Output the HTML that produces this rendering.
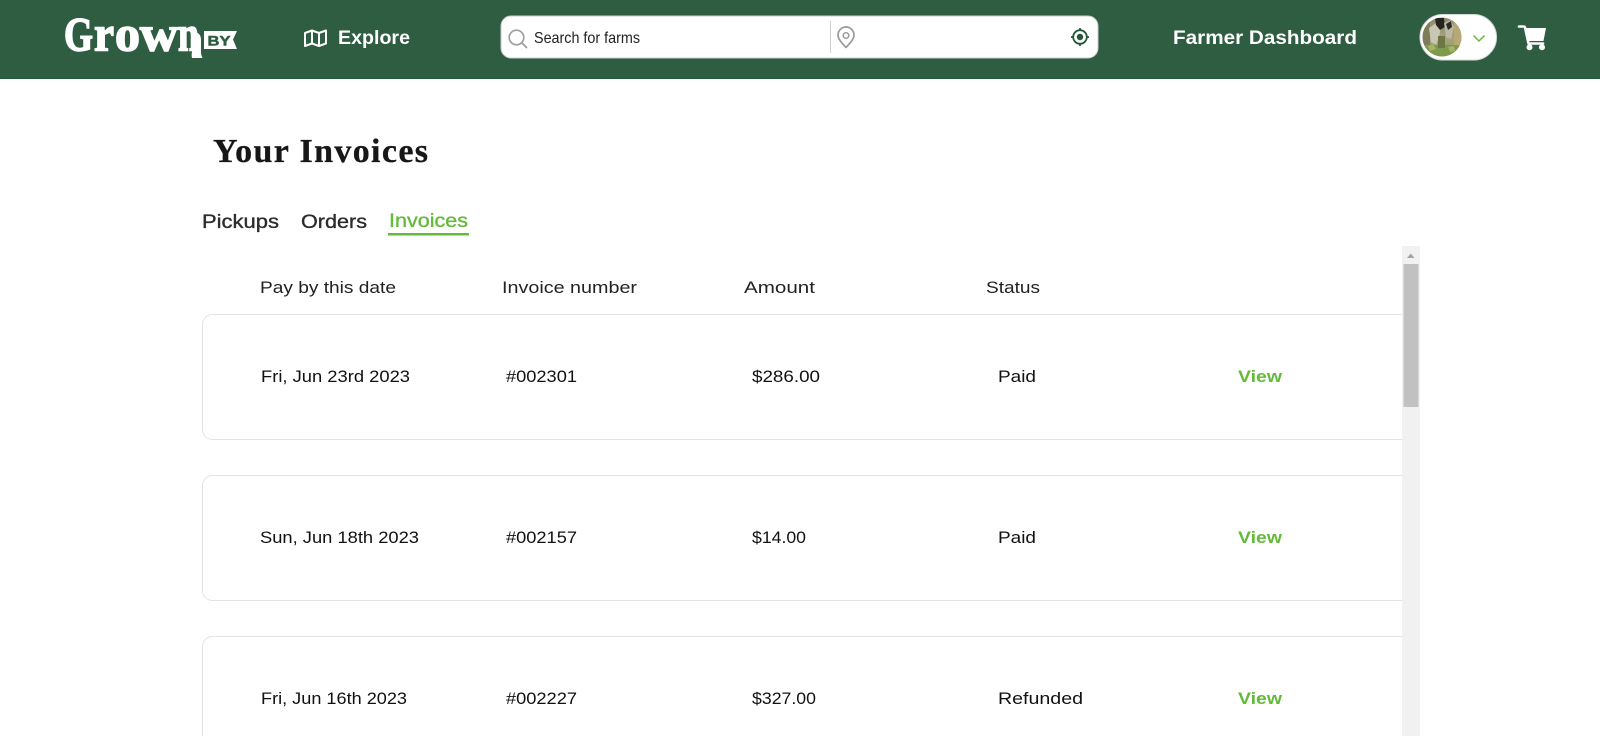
<!DOCTYPE html>
<html lang="en">
<head>
<meta charset="utf-8">
<title>Your Invoices</title>
<style>
html,body{margin:0;padding:0;background:#fff;width:1600px;height:736px;overflow:hidden}
svg{display:block}
text{font-family:"Liberation Sans",sans-serif}
.nav{font-weight:700;font-size:19px;fill:#fff}
.logo{font-family:"Liberation Serif",serif;font-size:50px;font-weight:700;fill:#fff;stroke:#fff;stroke-width:1.600}
.tab{font-size:19px;fill:#2c2c2c;stroke:#2c2c2c;stroke-width:.35}
.th{font-size:16.5px;fill:#222}
.td{font-size:16.5px;fill:#111}
.view{font-size:17px;font-weight:700;fill:#63bb39}
</style>
</head>
<body>
<svg width="1600" height="736" viewBox="0 0 1600 736" xmlns="http://www.w3.org/2000/svg">
  <defs>
    <clipPath id="av"><circle cx="1442" cy="37" r="19.500"/></clipPath>
    <clipPath id="list"><rect x="190" y="300" width="1212" height="436"/></clipPath>
    <linearGradient id="avg" x1="0" y1="0" x2="0" y2="1">
      <stop offset="0" stop-color="#8f8a70"/>
      <stop offset=".55" stop-color="#a6a47c"/>
      <stop offset="1" stop-color="#7f9a52"/>
    </linearGradient>
  </defs>
  <rect width="1600" height="736" fill="#fff"/>

  <!-- header -->
  <rect width="1600" height="79" fill="#2f5d41"/>
  <rect y="78" width="1600" height="1" fill="#1e5a3a"/>

  <!-- logo -->
  <text class="logo" x="64" y="50.500" textLength="29" lengthAdjust="spacingAndGlyphs" style="font-size:48px">G</text>
  <text class="logo" x="94" y="50.500" textLength="20" lengthAdjust="spacingAndGlyphs">r</text>
  <text class="logo" x="115" y="50.500" textLength="25" lengthAdjust="spacingAndGlyphs">o</text>
  <text class="logo" x="140" y="50.500" textLength="38" lengthAdjust="spacingAndGlyphs">w</text>
  <text class="logo" x="178" y="50.500" textLength="21" lengthAdjust="spacingAndGlyphs">n</text>
  <path d="M191 35c4-4 10-3 10 5v12c0 2 .5 4 1.500 6h-10.500c-.5-2-.5-4 0-6z" fill="#fff"/>
  <path d="M204 31h33l-4 8.500 4 9.500h-33z" fill="#fff"/>
  <text x="207.500" y="45.500" font-size="14" font-weight="700" textLength="23" lengthAdjust="spacingAndGlyphs" fill="#2f5d41" stroke="#2f5d41" stroke-width=".5">BY</text>

  <!-- explore -->
  <path d="M305 33l7-2.500 7 2.500 7-2.500v13l-7 2.500-7-2.500-7 2.500zM312 31v12.500M319 33v12.500" fill="none" stroke="#fff" stroke-width="2" stroke-linejoin="round"/>
  <text class="nav" x="338" y="44" textLength="72" lengthAdjust="spacingAndGlyphs">Explore</text>

  <!-- search -->
  <rect x="501" y="16" width="597" height="42" rx="10" fill="#fff" stroke="#c9cdc9" stroke-width="1"/>
  <circle cx="516.500" cy="37.500" r="7.300" fill="none" stroke="#a0a0a0" stroke-width="1.700"/>
  <path d="M522 43l4.500 4.500" stroke="#a0a0a0" stroke-width="1.900" stroke-linecap="round"/>
  <text x="534" y="43" font-size="16" textLength="106" lengthAdjust="spacingAndGlyphs" fill="#222">Search for farms</text>
  <rect x="830" y="21" width="1" height="32" fill="#cfcfcf"/>
  <path d="M846 47.500c-3-3.500-8-8-8-12.500a8 8 0 0 1 16 0c0 4.500-5 9-8 12.500z" fill="none" stroke="#9a9a9a" stroke-width="1.700" stroke-linejoin="round"/>
  <circle cx="846" cy="35.500" r="2.800" fill="none" stroke="#9a9a9a" stroke-width="1.500"/>
  <circle cx="1080" cy="37" r="6.800" fill="none" stroke="#24563a" stroke-width="1.800"/>
  <circle cx="1080" cy="37" r="3.200" fill="#24563a"/>
  <path d="M1080 28v3M1080 43v3M1071 37h3M1086 37h3" stroke="#24563a" stroke-width="1.700"/>

  <!-- dashboard -->
  <text class="nav" x="1173" y="44" textLength="184" lengthAdjust="spacingAndGlyphs">Farmer Dashboard</text>

  <!-- avatar pill -->
  <rect x="1420" y="14.500" width="76.500" height="45.500" rx="22.700" fill="#fff" stroke="#d7dbd7" stroke-width="1"/>
  <g clip-path="url(#av)">
    <g transform="translate(30 0)">
      <rect x="1392" y="17" width="40" height="40" fill="url(#avg)"/>
      <rect x="1392" y="17" width="8" height="40" fill="#7f7c58"/>
      <rect x="1424" y="17" width="8" height="40" fill="#b8a878"/>
      <path d="M1399 28l7-5 5 4-2 10-3 8-5-3z" fill="#c9c6b4"/>
      <path d="M1405 18h9l1 9-5 3-4-5z" fill="#26241f"/>
      <path d="M1414 23l7-3 3 7-3 12-5-2z" fill="#bdb8a4"/>
      <path d="M1416 24l5-3 1 6-4 3z" fill="#2e2b26"/>
      <path d="M1393 45h38v13h-38z" fill="#7f9a4c"/>
      <path d="M1408 36h7v12h-7z" fill="#6c7745"/>
      <path d="M1398 46l5-2 3 5-6 2zM1418 47l6-1 1 5-5 1z" fill="#a4b468"/>
    </g>
  </g>
  <path d="M1473.500 35.500l5.500 5.500 5.500-5.500" fill="none" stroke="#63bb39" stroke-width="1.500"/>

  <!-- cart -->
  <path d="M1519 26.500h4.500c.8 0 1.400.5 1.600 1.300l3.400 15.700h14.500" fill="none" stroke="#fff" stroke-width="2.600" stroke-linecap="round" stroke-linejoin="round"/>
  <path d="M1525 28h21l-2.500 13h-16z" fill="#fff"/>
  <circle cx="1529.500" cy="47.300" r="3" fill="#fff"/>
  <circle cx="1542" cy="47.300" r="3" fill="#fff"/>

  <!-- title -->
  <text x="213" y="162" font-size="34" font-weight="700" textLength="215" lengthAdjust="spacing" stroke="#171717" stroke-width=".3" style="font-family:'Liberation Serif',serif" fill="#171717">Your Invoices</text>

  <!-- tabs -->
  <text class="tab" x="202" y="228" textLength="77" lengthAdjust="spacingAndGlyphs">Pickups</text>
  <text class="tab" x="301" y="228" textLength="66" lengthAdjust="spacingAndGlyphs">Orders</text>
  <text class="tab" x="389" y="227" textLength="79" lengthAdjust="spacingAndGlyphs" style="fill:#63bb39;stroke:#63bb39">Invoices</text>
  <rect x="388" y="233" width="81" height="2.500" fill="#63bb39"/>

  <!-- table header -->
  <text class="th" x="260" y="293" textLength="136" lengthAdjust="spacingAndGlyphs">Pay by this date</text>
  <text class="th" x="502" y="293" textLength="135" lengthAdjust="spacingAndGlyphs">Invoice number</text>
  <text class="th" x="744" y="293" textLength="71" lengthAdjust="spacingAndGlyphs">Amount</text>
  <text class="th" x="986" y="293" textLength="54" lengthAdjust="spacingAndGlyphs">Status</text>

  <!-- rows -->
  <g clip-path="url(#list)">
    <rect x="202.500" y="314.500" width="1230" height="125" rx="10" fill="#fff" stroke="#e3e3e3"/>
    <rect x="202.500" y="475.500" width="1230" height="125" rx="10" fill="#fff" stroke="#e3e3e3"/>
    <rect x="202.500" y="636.500" width="1230" height="125" rx="10" fill="#fff" stroke="#e3e3e3"/>
  </g>
  <text class="td" x="261" y="382" textLength="149" lengthAdjust="spacingAndGlyphs">Fri, Jun 23rd 2023</text>
  <text class="td" x="506" y="382" textLength="71" lengthAdjust="spacingAndGlyphs">#002301</text>
  <text class="td" x="752" y="382" textLength="68" lengthAdjust="spacingAndGlyphs">$286.00</text>
  <text class="td" x="998" y="382" textLength="38" lengthAdjust="spacingAndGlyphs">Paid</text>
  <text class="view" x="1238" y="382" textLength="44" lengthAdjust="spacingAndGlyphs">View</text>

  <text class="td" x="260" y="543" textLength="159" lengthAdjust="spacingAndGlyphs">Sun, Jun 18th 2023</text>
  <text class="td" x="506" y="543" textLength="71" lengthAdjust="spacingAndGlyphs">#002157</text>
  <text class="td" x="752" y="543" textLength="54" lengthAdjust="spacingAndGlyphs">$14.00</text>
  <text class="td" x="998" y="543" textLength="38" lengthAdjust="spacingAndGlyphs">Paid</text>
  <text class="view" x="1238" y="543" textLength="44" lengthAdjust="spacingAndGlyphs">View</text>

  <text class="td" x="261" y="704" textLength="146" lengthAdjust="spacingAndGlyphs">Fri, Jun 16th 2023</text>
  <text class="td" x="506" y="704" textLength="71" lengthAdjust="spacingAndGlyphs">#002227</text>
  <text class="td" x="752" y="704" textLength="64" lengthAdjust="spacingAndGlyphs">$327.00</text>
  <text class="td" x="998" y="704" textLength="85" lengthAdjust="spacingAndGlyphs">Refunded</text>
  <text class="view" x="1238" y="704" textLength="44" lengthAdjust="spacingAndGlyphs">View</text>

  <!-- scrollbar -->
  <rect x="1402" y="246" width="18" height="490" fill="#f1f1f1"/>
  <rect x="1403.500" y="264" width="15" height="143" fill="#c1c1c1"/>
  <path d="M1407 258h7.500l-3.750-4.500z" fill="#a3a3a3"/>
</svg>
</body>
</html>
